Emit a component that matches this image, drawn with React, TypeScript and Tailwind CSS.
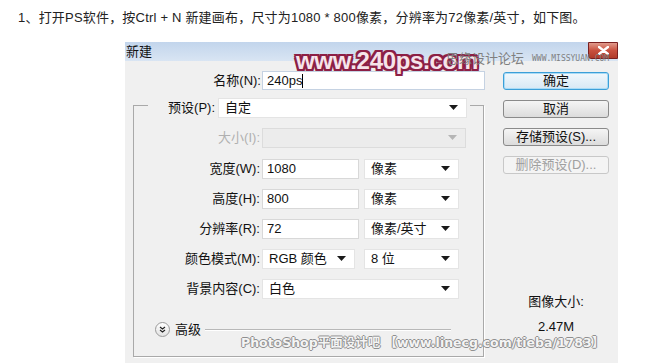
import { ReactNode } from "react"

const ui = "font-['Liberation_Sans','Noto_Sans_CJK_SC',sans-serif]"

function Arrow({ dim }: { dim?: boolean }) {
  return (
    <svg width="9" height="5" viewBox="0 0 9 5" className="shrink-0">
      <path d="M0 0h9L4.5 5z" fill={dim ? "#b5b5b5" : "#1a1a1a"} />
    </svg>
  )
}

function Select({ value, w, dim }: { value?: string; w: string; dim?: boolean }) {
  return (
    <div
      className={`${w} h-[20px] flex items-center justify-between pl-[6px] pr-[8px] border ${
        dim ? "bg-[#ececec] border-[#dcdcdc]" : "bg-white border-[#e4e4e4]"
      }`}
    >
      <span className="text-[13px] text-[#111]">{value}</span>
      <Arrow dim={dim} />
    </div>
  )
}

function Input({ value, w }: { value: string; w: string }) {
  return (
    <div className={`${w} h-[20px] bg-white border border-[#d8d8d8] flex items-center pl-[4px] text-[13px] text-[#111]`}>
      {value}
    </div>
  )
}

function Row({ label, children, mt, dim }: { label: string; children: ReactNode; mt: string; dim?: boolean }) {
  return (
    <div className={`flex items-center ${mt}`}>
      <div className={`w-[128px] text-right pr-[2px] text-[13px] ${dim ? "text-[#b0b0b0]" : "text-[#111]"}`}>{label}</div>
      <div className="flex items-center gap-[5px]">{children}</div>
    </div>
  )
}

function Btn({ children, mt, primary, disabled }: { children: ReactNode; mt: string; primary?: boolean; disabled?: boolean }) {
  return (
    <div
      className={`${mt} w-[106px] h-[18px] rounded-[3px] flex items-center justify-center text-[13px] border ${
        primary
          ? "border-[#3c9fd8] bg-gradient-to-b from-[#f2f8fc] to-[#d7e8f4] text-[#111] shadow-[inset_0_0_0_1px_#a9dbf6]"
          : disabled
          ? "border-[#c8c8c8] bg-[#f4f4f4] text-[#a0a0a0]"
          : "border-[#8a8a8a] bg-gradient-to-b from-[#f5f5f5] to-[#dcdcdc] text-[#111]"
      }`}
    >
      {children}
    </div>
  )
}

export default function App() {
  return (
    <div className={`relative w-[650px] h-[363px] bg-white overflow-hidden ${ui}`}>
      <p className="h-[42px] pl-[18px] pt-[10px] text-[13px] leading-[16px] text-[#222] tracking-[0.2px]">
        1、打开PS软件，按Ctrl + N 新建画布，尺寸为1080 * 800像素，分辨率为72像素/英寸，如下图。
      </p>

      <div className="ml-[125px] w-[493px] h-[321px] bg-[#f0f0f0]">
        {/* title bar */}
        <div className="h-[19px] flex items-center justify-between bg-gradient-to-b from-[#c2d5ec] to-[#d9e5f3]">
          <span className="pl-[1px] text-[13px] text-[#111]">新建</span>
          <div className="self-start w-[30px] h-[17px] rounded-bl-[3px] border border-[#7a2020] bg-gradient-to-b from-[#e09a8c] via-[#c8503f] to-[#b03a2a] flex items-center justify-center">
            <svg width="11" height="9" viewBox="0 0 11 9">
              <path d="M1 1l9 7M10 1L1 8" stroke="#fff" strokeWidth="2.4" strokeLinecap="round" />
            </svg>
          </div>
        </div>

        <div className="flex">
          {/* form */}
          <div className="w-[378px] pt-[10px]">
            <div className="flex items-center">
              <div className="w-[137px] text-right pr-[1px] text-[13px] text-[#111]">名称(N):</div>
              <div className="w-[223px] h-[19px] bg-white border border-[#c5d2e2] flex items-center pl-[4px] text-[13px] text-[#111]">
                240ps<span className="w-px h-[14px] bg-black" />
              </div>
            </div>

            <div className="ml-[8px] mt-[14px] w-[351px] h-[252px] border border-[#a9a9a9] shadow-[1px_1px_0_#fff]">
              <div className="-mt-[8px] ml-[14px] w-[322px] flex items-center bg-[#f0f0f0]">
                <div className="w-[67px] text-right text-[13px] text-[#111]">预设(P):</div>
                <div className="ml-[3px]">
                  <Select value="自定" w="w-[249px]" />
                </div>
              </div>
              <Row label="大小(I):" mt="mt-[10px]" dim>
                <Select w="w-[204px]" dim />
              </Row>
              <Row label="宽度(W):" mt="mt-[11px]">
                <Input value="1080" w="w-[97px]" />
                <Select value="像素" w="w-[95px]" />
              </Row>
              <Row label="高度(H):" mt="mt-[10px]">
                <Input value="800" w="w-[97px]" />
                <Select value="像素" w="w-[95px]" />
              </Row>
              <Row label="分辨率(R):" mt="mt-[10px]">
                <Input value="72" w="w-[97px]" />
                <Select value="像素/英寸" w="w-[95px]" />
              </Row>
              <Row label="颜色模式(M):" mt="mt-[10px]">
                <Select value="RGB 颜色" w="w-[93px]" />
                <div className="ml-[4px]">
                  <Select value="8 位" w="w-[95px]" />
                </div>
              </Row>
              <Row label="背景内容(C):" mt="mt-[10px]">
                <Select value="白色" w="w-[197px]" />
              </Row>
              <div className="mt-[21px] pl-[21px] flex items-center">
                <div className="w-[15px] h-[15px] rounded-full border border-[#9a9a9a] bg-gradient-to-b from-white to-[#e2e2e2] flex items-center justify-center">
                  <svg width="7" height="7" viewBox="0 0 7 7">
                    <path d="M1 1l2.5 2 2.5-2M1 4l2.5 2 2.5-2" stroke="#222" strokeWidth="1.2" fill="none" />
                  </svg>
                </div>
                <span className="ml-[5px] text-[13px] text-[#111]">高级</span>
                <div className="ml-[4px] w-[246px] h-px bg-[#b8b8b8] shadow-[0_1px_0_#fff]" />
              </div>
            </div>
          </div>

          {/* buttons */}
          <div className="pt-[11px] flex flex-col items-center w-[106px]">
            <Btn mt="" primary>确定</Btn>
            <Btn mt="mt-[10px]">取消</Btn>
            <Btn mt="mt-[10px]">存储预设(S)...</Btn>
            <Btn mt="mt-[10px]" disabled>删除预设(D)...</Btn>
            <div className="mt-[118px] text-[13px] text-[#111]">图像大小:</div>
            <div className="mt-[5px] text-[13px] text-[#111]">2.47M</div>
          </div>
        </div>
      </div>

      {/* watermarks */}
      <div className="absolute left-[296px] top-[47px] font-['Liberation_Sans',sans-serif] font-bold text-[24px] leading-[28px] tracking-[-0.3px] text-[#f6e4ea] [text-shadow:2px_0_0_#8c1f45,-2px_0_0_#8c1f45,0_2px_0_#8c1f45,0_-2px_0_#8c1f45,2px_2px_0_#8c1f45,-2px_-2px_0_#8c1f45,2px_-2px_0_#8c1f45,-2px_2px_0_#8c1f45]">
        www.240ps.com
      </div>
      <div className="absolute left-[446px] top-[49px] flex items-center gap-[8px] text-[#7f7f7f]">
        <span className="text-[13px]">思缘设计论坛</span>
        <span className="text-[8px] font-['DejaVu_Sans_Mono',monospace]">WWW.MISSYUAN.COM</span>
      </div>
      <div className="absolute left-[241px] top-[335px] font-['DejaVu_Sans','Noto_Sans_CJK_SC',sans-serif] font-bold text-[12.5px] leading-[16px] text-[#f4f4f4] [text-shadow:1px_0_0_#8f8f8f,-1px_0_0_#8f8f8f,0_1px_0_#8f8f8f,0_-1px_0_#8f8f8f]">
        PhotoShop平面设计吧 【www.linecg.com/tieba/1783】
      </div>
    </div>
  )
}
